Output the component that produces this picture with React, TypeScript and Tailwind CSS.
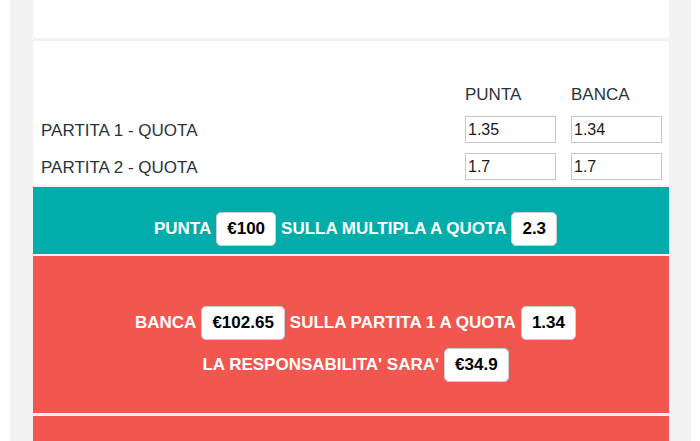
function Badge({ children }: { children: React.ReactNode }) {
  return (
    <span className="inline-flex items-center h-[34px] px-[10px] mx-[5px] bg-white text-black rounded-[5px] border border-[#c9ced3]">
      {children}
    </span>
  );
}

export default function App() {
  const rows = [
    { label: "PARTITA 1 - QUOTA", punta: "1.35", banca: "1.34" },
    { label: "PARTITA 2 - QUOTA", punta: "1.7", banca: "1.7" },
  ];

  return (
    <div
      className="w-full h-[441px] overflow-hidden bg-white pl-[10px] pr-[9px]"
      style={{ fontFamily: '"Liberation Sans", Arial, sans-serif' }}
    >
      <div className="h-full bg-[#f1f2f1] pl-[23px] pr-[22px] flex flex-col">
        <div className="h-[38px] bg-white rounded-b-[3px] shrink-0" />

        <div className="mt-[3px] bg-white rounded-t-[3px] pl-[8px] pr-[7px] pt-[43px] pb-[5px] text-[#2a333c] text-[17px] shrink-0">
          <div className="flex items-center h-[21px]">
            <div className="flex-1" />
            <div className="w-[91px]">PUNTA</div>
            <div className="w-[91px] ml-[15px]">BANCA</div>
          </div>
          {rows.map((r, i) => (
            <div key={i} className={`flex items-center h-[27px] ${i === 0 ? "mt-[11px]" : "mt-[10px]"}`}>
              <div className="flex-1 pt-[2px]">{r.label}</div>
              <div className="w-[91px] h-[27px] border border-[#c8c8c8] px-[2px] flex items-center text-[16px] text-[#1a1a1a]">
                {r.punta}
              </div>
              <div className="w-[91px] h-[27px] ml-[15px] border border-[#c8c8c8] px-[2px] flex items-center text-[16px] text-[#1a1a1a]">
                {r.banca}
              </div>
            </div>
          ))}
        </div>

        <div className="mt-[2px] bg-[#00adaa] pl-[14px] pt-[25px] pb-[8px] flex justify-center items-center text-white font-bold text-[17px] shrink-0">
          PUNTA <Badge>€100</Badge> SULLA MULTIPLA A QUOTA <Badge>2.3</Badge>
        </div>

        <div className="mt-[2px] bg-[#f1574f] pl-[14px] pt-[50px] pb-[31px] flex flex-col items-center gap-[8px] text-white font-bold text-[17px] shrink-0">
          <div className="flex items-center">
            BANCA <Badge>€102.65</Badge> SULLA PARTITA 1 A QUOTA <Badge>1.34</Badge>
          </div>
          <div className="flex items-center">
            LA RESPONSABILITA' SARA' <Badge>€34.9</Badge>
          </div>
        </div>

        <div className="mt-[3px] bg-[#f1574f] flex-1" />
      </div>
    </div>
  );
}
